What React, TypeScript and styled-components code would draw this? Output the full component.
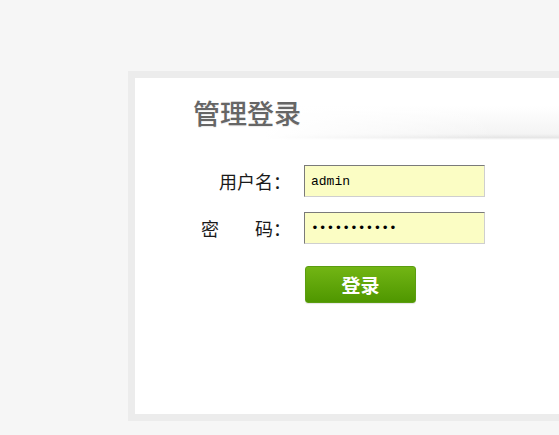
import React from 'react';
import styled, { createGlobalStyle } from 'styled-components';

const GlobalStyle = createGlobalStyle`
  html, body {
    margin: 0;
    padding: 0;
    background: #f6f6f6;
    overflow: hidden;
  }
`;

const App: React.FunctionComponent = () => (
  <>
    <GlobalStyle />
    <Page>
      <LoginBox>
        <Header>
          <Title>管理登录</Title>
        </Header>
        <Form onSubmit={(e) => e.preventDefault()}>
          <Row>
            <Label>用户名：</Label>
            <Input type="text" defaultValue="admin" />
          </Row>
          <Row>
            <Label>密&#12288;&#12288;码：</Label>
            <Input type="password" defaultValue="12345678901" />
          </Row>
          <Row>
            <Label />
            <Submit type="submit">登录</Submit>
          </Row>
        </Form>
      </LoginBox>
    </Page>
  </>
);

const Page = styled.div`
  width: 559px;
  height: 435px;
  padding: 71px 0 0 128px;
  box-sizing: border-box;
  overflow: hidden;
`;

const LoginBox = styled.div`
  width: 520px;
  height: 336px;
  background: #fff;
  border: 7px solid #ececec;
`;

const Header = styled.div`
  height: 62px;
  padding-left: 58px;
  box-sizing: border-box;
  display: flex;
  align-items: center;
  background:
    linear-gradient(to right, #fff 25%, rgba(255, 255, 255, 0) 70%),
    linear-gradient(to bottom, #fff 45%, #f4f4f4 90%, #e6e6e6 96%, #fff 100%);
`;

const Title = styled.h1`
  margin: 6px 0 0;
  font-family: 'Noto Sans CJK SC', 'Noto Sans', sans-serif;
  font-size: 27px;
  font-weight: 500;
  color: #666;
  text-shadow: 0 1px 1px rgba(0, 0, 0, 0.08);
`;

const Form = styled.form`
  display: flex;
  flex-direction: column;
  gap: 15px;
  padding: 25px 0 0 65px;
`;

const Row = styled.div`
  display: flex;
  align-items: center;
  gap: 13px;
  &:last-child {
    margin-top: 7px;
  }
`;

const Label = styled.label`
  width: 91px;
  text-align: right;
  font-family: 'Noto Sans CJK SC', sans-serif;
  font-size: 18px;
  color: #1a1a1a;
  white-space: nowrap;
`;

const Input = styled.input`
  width: 181px;
  height: 32px;
  box-sizing: border-box;
  padding: 0 6px;
  background: #fbfdc4;
  border: 1px solid;
  border-color: #7a7a7a #cfcfcf #cfcfcf #7a7a7a;
  font-family: 'Liberation Mono', monospace;
  font-size: 13px;
  color: #000;
  outline: none;
`;

const Submit = styled.button`
  margin-left: 1px;
  width: 111px;
  height: 37px;
  border: 1px solid #5b9d10;
  border-radius: 3px;
  background: linear-gradient(to bottom, #72b514, #4f9700);
  color: #fff;
  font-family: 'Noto Sans CJK SC', sans-serif;
  font-size: 19px;
  font-weight: 700;
  cursor: pointer;
  box-shadow: 0 1px 1px rgba(0, 0, 0, 0.1);
`;

export default App;
